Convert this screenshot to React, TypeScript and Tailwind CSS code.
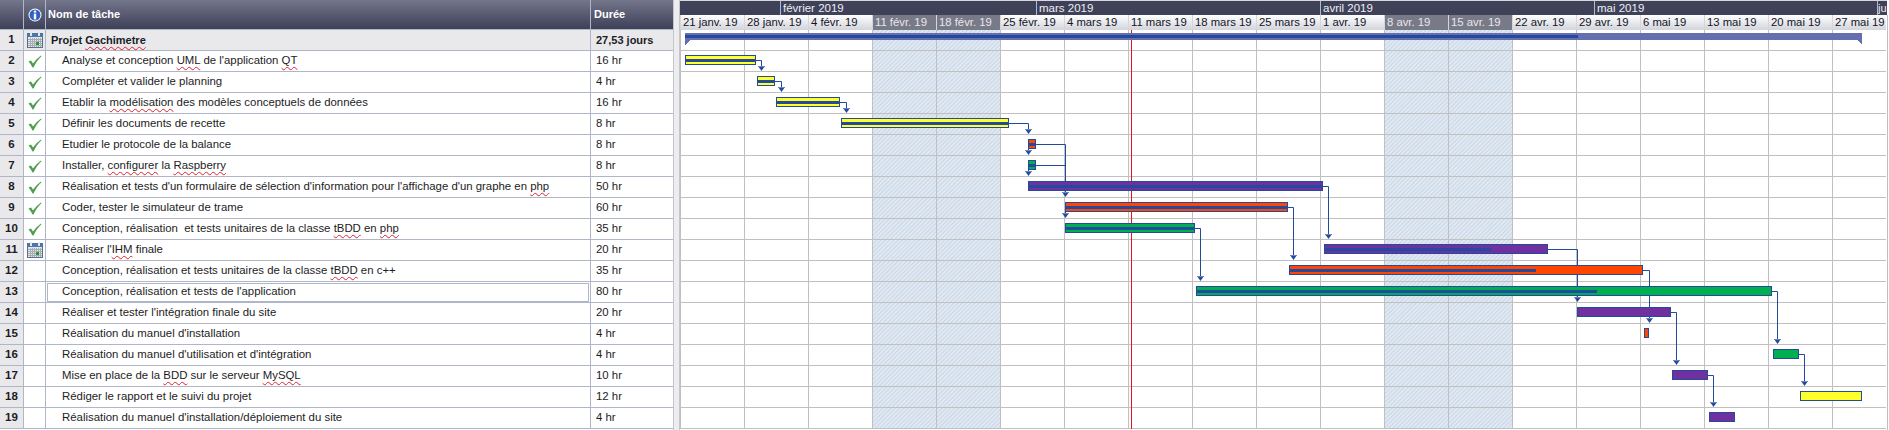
import type { ReactNode } from "react";

const Sp = ({ children }: { children: ReactNode }) => (
  <span className="underline decoration-wavy decoration-[#e0202a] decoration-1 underline-offset-2">{children}</span>
);

type Task = { name: ReactNode; dur: string; icon?: "check" | "cal" };

const tasks: Task[] = [
  { name: <>Projet <Sp>Gachimetre</Sp></>, dur: "27,53 jours", icon: "cal" },
  { name: <>Analyse et conception <Sp>UML</Sp> de l'application <Sp>QT</Sp></>, dur: "16 hr", icon: "check" },
  { name: "Compléter et valider le planning", dur: "4 hr", icon: "check" },
  { name: <>Etablir la <Sp>modélisation</Sp> des modèles conceptuels de données</>, dur: "16 hr", icon: "check" },
  { name: "Définir les documents de recette", dur: "8 hr", icon: "check" },
  { name: "Etudier le protocole de la balance", dur: "8 hr", icon: "check" },
  { name: <>Installer, <Sp>configurer</Sp> la <Sp>Raspberry</Sp></>, dur: "8 hr", icon: "check" },
  { name: <>Réalisation et tests d'un formulaire de sélection d'information pour l'affichage d'un graphe en <Sp>php</Sp></>, dur: "50 hr", icon: "check" },
  { name: "Coder, tester le simulateur de trame", dur: "60 hr", icon: "check" },
  { name: <>Conception, réalisation  et tests unitaires de la classe <Sp>tBDD</Sp> en <Sp>php</Sp></>, dur: "35 hr", icon: "check" },
  { name: <>Réaliser l'<Sp>IHM</Sp> finale</>, dur: "20 hr", icon: "cal" },
  { name: <>Conception, réalisation et tests unitaires de la classe <Sp>tBDD</Sp> en c++</>, dur: "35 hr" },
  { name: "Conception, réalisation et tests de l'application", dur: "80 hr" },
  { name: "Réaliser et tester l'intégration finale du site", dur: "20 hr" },
  { name: "Réalisation du manuel d'installation", dur: "4 hr" },
  { name: "Réalisation du manuel d'utilisation et d'intégration", dur: "4 hr" },
  { name: <>Mise en place de la <Sp>BDD</Sp> sur le serveur <Sp>MySQL</Sp></>, dur: "10 hr" },
  { name: "Rédiger le rapport et le suivi du projet", dur: "12 hr" },
  { name: "Réalisation du manuel d'installation/déploiement du site", dur: "4 hr" },
];

const months = [
  { label: "", cls: "w-[100px]" },
  { label: "février 2019", cls: "w-[256px] pl-[2px]" },
  { label: "mars 2019", cls: "w-[284px] pl-[2px]" },
  { label: "avril 2019", cls: "w-[274px] pl-[2px]" },
  { label: "mai 2019", cls: "w-[283px] pl-[2px]" },
  { label: "ju", cls: "w-[10px] text-[11px]" },
];

const weeks = [
  "21 janv. 19", "28 janv. 19", "4 févr. 19", "11 févr. 19", "18 févr. 19", "25 févr. 19", "4 mars 19",
  "11 mars 19", "18 mars 19", "25 mars 19", "1 avr. 19", "8 avr. 19", "15 avr. 19", "22 avr. 19",
  "29 avr. 19", "6 mai 19", "13 mai 19", "20 mai 19", "27 mai 19",
];
const offWeeks = ["11 févr. 19", "18 févr. 19", "8 avr. 19", "15 avr. 19"];

const YELLOW = "#ffff2a";
const ORANGE = "#ff4500";
const GREEN = "#00b050";
const PURPLE = "#7030a0";
const BLUE = "#234a9c";

// row is 1-based like the table, done = where the progress stripe ends
const bars = [
  { row: 2, x0: 685, x1: 756, color: YELLOW, done: 756 },
  { row: 3, x0: 757, x1: 775, color: YELLOW, done: 775 },
  { row: 4, x0: 776, x1: 840, color: YELLOW, done: 840 },
  { row: 5, x0: 841, x1: 1009, color: YELLOW, done: 1009 },
  { row: 6, x0: 1028, x1: 1036, color: ORANGE, done: 1036 },
  { row: 7, x0: 1028, x1: 1036, color: GREEN, done: 1036 },
  { row: 8, x0: 1028, x1: 1323, color: PURPLE, done: 1323 },
  { row: 9, x0: 1065, x1: 1288, color: ORANGE, done: 1288 },
  { row: 10, x0: 1065, x1: 1195, color: GREEN, done: 1195 },
  { row: 11, x0: 1324, x1: 1548, color: PURPLE, done: 1492 },
  { row: 12, x0: 1289, x1: 1643, color: ORANGE, done: 1537 },
  { row: 13, x0: 1196, x1: 1772, color: GREEN, done: 1598 },
  { row: 14, x0: 1577, x1: 1671, color: PURPLE, done: 0 },
  { row: 15, x0: 1644, x1: 1649, color: ORANGE, done: 0 },
  { row: 16, x0: 1773, x1: 1799, color: GREEN, done: 0 },
  { row: 17, x0: 1672, x1: 1708, color: PURPLE, done: 0 },
  { row: 18, x0: 1800, x1: 1862, color: YELLOW, done: 0 },
  { row: 19, x0: 1709, x1: 1735, color: PURPLE, done: 0 },
];

// from bar end, over to x, then down to the arrow at row `to`
const links = [
  { row: 2, from: 756, x: 761, to: 3 },
  { row: 3, from: 775, x: 781, to: 4 },
  { row: 4, from: 840, x: 846, to: 5 },
  { row: 5, from: 1009, x: 1028, to: 6 },
  { row: 6, from: 1028, x: 1028, to: 7 },
  { row: 7, from: 1028, x: 1028, to: 8 },
  { row: 6, from: 1036, x: 1065, to: 9 },
  { row: 7, from: 1036, x: 1065, to: 8, joins: true },
  { row: 9, from: 1065, x: 1065, to: 10 },
  { row: 8, from: 1323, x: 1328, to: 11 },
  { row: 9, from: 1288, x: 1293, to: 12 },
  { row: 10, from: 1195, x: 1200, to: 13 },
  { row: 11, from: 1548, x: 1577, to: 14 },
  { row: 12, from: 1643, x: 1649, to: 15 },
  { row: 13, from: 1772, x: 1777, to: 16 },
  { row: 14, from: 1671, x: 1676, to: 17 },
  { row: 16, from: 1799, x: 1804, to: 18 },
  { row: 17, from: 1708, x: 1713, to: 19 },
];

const barTop = (row: number) => 34 + 21 * (row - 1);

function CheckIcon() {
  return (
    <svg width="14" height="13" viewBox="0 0 14 13">
      <path d="M0.5 6.5 L3 5.5 L5 8.5 Q8 4 13 0.5 L13.5 1.2 Q9 5 5.5 12.5 L4.5 12.5 Q3 9 0.5 6.5Z" fill="#4f9e4f" />
    </svg>
  );
}

function CalIcon() {
  return (
    <svg width="16" height="16" viewBox="0 0 16 16" shapeRendering="crispEdges">
      <rect x="0.5" y="1.5" width="15" height="14" fill="#e4e6ea" stroke="#56708f" />
      <rect x="1" y="2" width="14" height="3" fill="#4d78ad" />
      <rect x="3" y="0" width="2" height="4" fill="#dfe6ee" />
      <rect x="11" y="0" width="2" height="4" fill="#dfe6ee" />
      {[3, 5, 7, 9, 11, 13].map((x) => (
        <rect key={x} x={x} y="6" width="1" height="9" fill="#a9acb2" />
      ))}
      {[7, 9, 11, 13].map((y) => (
        <rect key={y} x="1" y={y} width="14" height="1" fill="#a9acb2" />
      ))}
      <rect x="9" y="10" width="3" height="3" fill="#1f9a3c" />
    </svg>
  );
}

function InfoIcon() {
  return (
    <svg width="14" height="14" viewBox="0 0 14 14">
      <circle cx="7" cy="7" r="6.5" fill="#ffffff" />
      <circle cx="7" cy="7" r="5.5" fill="#2f62c4" />
      <rect x="5.8" y="2.6" width="2.4" height="2" fill="#ffffff" />
      <rect x="5.8" y="5.6" width="2.4" height="5.8" fill="#ffffff" />
    </svg>
  );
}

function Chart() {
  return (
    <svg width="1209" height="400" viewBox="680 30 1209 400" className="block">
      <defs>
        <pattern id="hatch" width="3" height="3" patternUnits="userSpaceOnUse" patternTransform="rotate(45)">
          <rect width="3" height="3" fill="#e6edf5" />
          <rect width="1.4" height="3" fill="#c9d7e7" />
        </pattern>
      </defs>
      <rect x="872" y="30" width="128" height="398" fill="url(#hatch)" />
      <rect x="1384" y="30" width="128" height="398" fill="url(#hatch)" />
      <g shapeRendering="crispEdges">
        {tasks.map((_, i) => (
          <rect key={i} x="680" y={50 + 21 * i} width="1206" height="1" fill="#c0c0c0" />
        ))}
        {weeks.map((_, i) => (
          <rect key={i} x={680 + 64 * i} y="30" width="1" height="399" fill="#c0c0c0" />
        ))}
        <rect x="1131" y="30" width="1" height="399" fill="#e8101c" />
      </g>

      {/* summary bar */}
      <path d="M685 33 H1862 V45 L1857 40 H690 L685 45Z" fill="#666fae" shapeRendering="crispEdges" />
      <rect x="685" y="35" width="893" height="3" fill={BLUE} shapeRendering="crispEdges" />

      {links.map((l, i) => {
        const y = barTop(l.row) + 5.5;
        const tip = barTop(l.to) - 5;
        return (
          <g key={i}>
            <path d={`M${l.from} ${y} H${l.x + 0.5} V${l.joins ? y : tip - 3}`} fill="none" stroke={BLUE} strokeWidth="1" />
            {!l.joins && (
              <>
                <path d={`M${l.x - 3} ${tip - 5} H${l.x + 4} L${l.x + 0.5} ${tip}Z`} fill={BLUE} />
                <rect x={l.x - 3} y={tip - 5} width="7" height="1" fill="#6d86bd" />
              </>
            )}
          </g>
        );
      })}

      <g shapeRendering="crispEdges">
        {bars.map((b) => {
          const y = barTop(b.row);
          return (
            <g key={b.row}>
              <rect x={b.x0} y={y} width={b.x1 - b.x0} height="10" rx="1" fill={BLUE} />
              <rect x={b.x0 + 1} y={y + 1} width={b.x1 - b.x0 - 2} height="8" fill={b.color} />
              {b.done > 0 && <rect x={b.x0 + 1} y={y + 4} width={b.done - b.x0 - 2} height="3" fill={BLUE} />}
            </g>
          );
        })}
      </g>
    </svg>
  );
}

export default function App() {
  return (
    <div className="flex w-[1889px] h-[430px] overflow-hidden bg-white font-['Liberation_Sans',Arial,sans-serif] text-[11.4px] text-[#1c1c24]">
      {/* task table */}
      <div className="w-[673px] shrink-0">
        <div className="flex h-[30px] bg-gradient-to-b from-[#74768c] to-[#3e4058] border-b border-[#aeb6c8] text-white font-bold text-[11px]">
          <div className="w-[24px] border-r border-[#aeb6c8]" />
          <div className="w-[22px] border-r border-[#aeb6c8] flex items-center justify-center">
            <InfoIcon />
          </div>
          <div className="w-[545px] border-r border-[#aeb6c8] flex items-center pl-[2px]">Nom de tâche</div>
          <div className="flex-1 flex items-center pl-[3px]">Durée</div>
        </div>
        {tasks.map((t, i) => (
          <div key={i} className={`flex h-[21px] border-b border-[#aeb6c8] ${i === 0 ? "bg-[#e9e9ec] font-bold text-[11px]" : ""}`}>
            <div className="w-[24px] bg-[#e9e9ec] border-r border-[#aeb6c8] flex items-center justify-center font-bold text-[11.5px]">
              {i + 1}
            </div>
            <div className="w-[22px] border-r border-[#aeb6c8] flex items-center justify-center">
              {t.icon === "check" && <CheckIcon />}
              {t.icon === "cal" && <CalIcon />}
            </div>
            <div
              className={`w-[545px] border-r border-[#aeb6c8] flex items-center whitespace-pre ${
                i === 0 ? "pl-[5px]" : i === 12 ? "pl-[1px] pr-[1px]" : "pl-[16px]"
              }`}
            >
              {i === 12 ? (
                <div className="flex items-center w-full h-[19px] pl-[14px] border border-[#aeb6c8] bg-white">{t.name}</div>
              ) : (
                <span>{t.name}</span>
              )}
            </div>
            <div className="flex-1 flex items-center pl-[5px]">{t.dur}</div>
          </div>
        ))}
      </div>

      {/* splitter */}
      <div className="w-[7px] shrink-0 bg-[#ededf0] border-x border-[#c4c6cc]" />

      {/* gantt */}
      <div className="w-[1209px] shrink-0">
        <div className="h-[1px] w-[1207px] bg-[#d8d8dc]" />
        <div className="flex h-[14px] w-[1207px] bg-[#3f4159] text-[#eeeef4] text-[11.5px] leading-[14px] overflow-hidden">
          {months.map((m, i) => (
            <div key={i} className={`${m.cls} shrink-0 overflow-hidden ${i > 0 ? "border-l border-[#b8bac8]" : ""}`}>
              {m.label}
            </div>
          ))}
        </div>
        <div className="flex h-[15px] w-[1206px] text-[11.3px] leading-[15px]">
          {weeks.map((w, i) => (
            <div
              key={w}
              className={`${i === 18 ? "w-[54px]" : "w-[64px]"} shrink-0 pl-[2px] whitespace-nowrap border-l border-[#d4d6dc] ${
                offWeeks.includes(w)
                  ? "bg-[#787a88] text-[#e8e8ee]"
                  : "bg-gradient-to-b from-[#ffffff] to-[#d2d4dc] text-[#14141c]"
              }`}
            >
              {w}
            </div>
          ))}
        </div>
        <div className="relative">
          <Chart />
          <div className="absolute right-[1px] top-[-15px] bottom-0 w-[1px] bg-[#c0c0c4]" />
        </div>
      </div>
    </div>
  );
}
